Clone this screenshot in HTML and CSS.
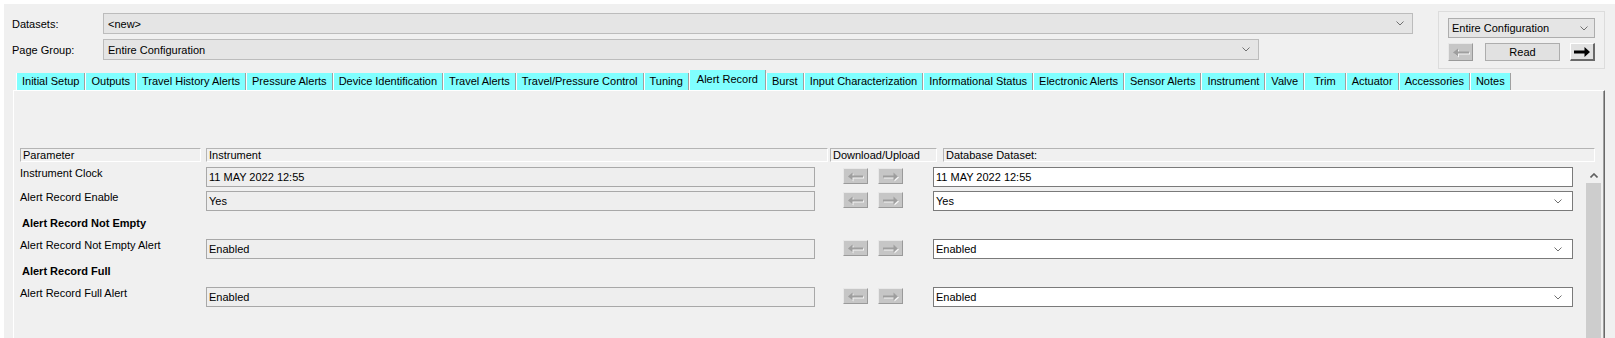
FILE: index.html
```html
<!DOCTYPE html>
<html lang="en">

<head>
  <meta charset="UTF-8">
  <title>Alert Record</title>
  <link rel="stylesheet" href="styles.css">
</head>

<body>
  <div class="window">
    <div class="top">
      <div class="selectors">
        <div class="sel-row">
          <label>Datasets:</label>
          <div class="combo combo-dataset"><span>&lt;new&gt;</span>
            <svg class="chev" width="8" height="5" viewBox="0 0 8 5"><path d="M0.5 0.5 L4 4 L7.5 0.5" /></svg>
          </div>
        </div>
        <div class="sel-row">
          <label>Page Group:</label>
          <div class="combo combo-page"><span>Entire Configuration</span>
            <svg class="chev" width="8" height="5" viewBox="0 0 8 5"><path d="M0.5 0.5 L4 4 L7.5 0.5" /></svg>
          </div>
        </div>
      </div>

      <div class="group">
        <div class="combo combo-small"><span>Entire Configuration</span>
          <svg class="chev" width="8" height="5" viewBox="0 0 8 5"><path d="M0.5 0.5 L4 4 L7.5 0.5" /></svg>
        </div>
        <div class="btn-row">
          <div class="arrow-btn disabled">
            <svg width="16" height="9" viewBox="0 0 16 9"><path d="M0 4.5 L5 0.5 V3.5 H16 V5.5 H5 V8.5 Z" /></svg>
          </div>
          <div class="read-btn">Read</div>
          <div class="arrow-btn active">
            <svg width="16" height="10" viewBox="0 0 16 10"><path d="M16 5 L10.5 0 V3.5 H0 V6.5 H10.5 V10 Z" /></svg>
          </div>
        </div>
      </div>
    </div>

    <div class="tabs">
      <div class="tab">Initial Setup</div>
      <div class="tab">Outputs</div>
      <div class="tab">Travel History Alerts</div>
      <div class="tab">Pressure Alerts</div>
      <div class="tab">Device Identification</div>
      <div class="tab">Travel Alerts</div>
      <div class="tab">Travel/Pressure Control</div>
      <div class="tab">Tuning</div>
      <div class="tab selected">Alert Record</div>
      <div class="tab">Burst</div>
      <div class="tab">Input Characterization</div>
      <div class="tab">Informational Status</div>
      <div class="tab">Electronic Alerts</div>
      <div class="tab">Sensor Alerts</div>
      <div class="tab">Instrument</div>
      <div class="tab">Valve</div>
      <div class="tab trim">Trim</div>
      <div class="tab">Actuator</div>
      <div class="tab">Accessories</div>
      <div class="tab">Notes</div>
    </div>

    <div class="panel">
      <div class="head">
        <div class="h-cell h-param">Parameter</div>
        <div class="h-cell h-inst">Instrument</div>
        <div class="h-cell h-dl">Download/Upload</div>
        <div class="h-cell h-db">Database Dataset:</div>
      </div>

      <div class="body">
        <div class="grid">
          <!-- Instrument Clock -->
          <div class="label">Instrument Clock</div>
          <div class="box inst">11 MAY 2022 12:55</div>
          <div class="arrows">
            <div class="arrow-btn disabled"><svg width="15" height="9" viewBox="0 0 15 9"><path d="M0 4.5 L4.5 0.5 V3.5 H15 V5.5 H4.5 V8.5 Z" /></svg></div>
            <div class="arrow-btn disabled"><svg width="15" height="9" viewBox="0 0 15 9"><path d="M15 4.5 L10.5 0.5 V3.5 H0 V5.5 H10.5 V8.5 Z" /></svg></div>
          </div>
          <div class="box db">11 MAY 2022 12:55</div>

          <!-- Alert Record Enable -->
          <div class="label">Alert Record Enable</div>
          <div class="box inst">Yes</div>
          <div class="arrows">
            <div class="arrow-btn disabled"><svg width="15" height="9" viewBox="0 0 15 9"><path d="M0 4.5 L4.5 0.5 V3.5 H15 V5.5 H4.5 V8.5 Z" /></svg></div>
            <div class="arrow-btn disabled"><svg width="15" height="9" viewBox="0 0 15 9"><path d="M15 4.5 L10.5 0.5 V3.5 H0 V5.5 H10.5 V8.5 Z" /></svg></div>
          </div>
          <div class="box db select"><span>Yes</span>
            <svg class="chev" width="8" height="5" viewBox="0 0 8 5"><path d="M0.5 0.5 L4 4 L7.5 0.5" /></svg>
          </div>

          <div class="section">Alert Record Not Empty</div>

          <div class="label">Alert Record Not Empty Alert</div>
          <div class="box inst">Enabled</div>
          <div class="arrows">
            <div class="arrow-btn disabled"><svg width="15" height="9" viewBox="0 0 15 9"><path d="M0 4.5 L4.5 0.5 V3.5 H15 V5.5 H4.5 V8.5 Z" /></svg></div>
            <div class="arrow-btn disabled"><svg width="15" height="9" viewBox="0 0 15 9"><path d="M15 4.5 L10.5 0.5 V3.5 H0 V5.5 H10.5 V8.5 Z" /></svg></div>
          </div>
          <div class="box db select"><span>Enabled</span>
            <svg class="chev" width="8" height="5" viewBox="0 0 8 5"><path d="M0.5 0.5 L4 4 L7.5 0.5" /></svg>
          </div>

          <div class="section">Alert Record Full</div>

          <div class="label">Alert Record Full Alert</div>
          <div class="box inst">Enabled</div>
          <div class="arrows">
            <div class="arrow-btn disabled"><svg width="15" height="9" viewBox="0 0 15 9"><path d="M0 4.5 L4.5 0.5 V3.5 H15 V5.5 H4.5 V8.5 Z" /></svg></div>
            <div class="arrow-btn disabled"><svg width="15" height="9" viewBox="0 0 15 9"><path d="M15 4.5 L10.5 0.5 V3.5 H0 V5.5 H10.5 V8.5 Z" /></svg></div>
          </div>
          <div class="box db select"><span>Enabled</span>
            <svg class="chev" width="8" height="5" viewBox="0 0 8 5"><path d="M0.5 0.5 L4 4 L7.5 0.5" /></svg>
          </div>
        </div>

        <div class="scrollbar">
          <div class="scroll-up">
            <svg width="8" height="5" viewBox="0 0 8 5"><path d="M0.5 4.5 L4 1 L7.5 4.5" /></svg>
          </div>
          <div class="thumb"></div>
        </div>
      </div>
    </div>
  </div>
</body>

</html>
```

FILE: styles.css
```css
/* Reset */
* {
  margin: 0;
  padding: 0;
  box-sizing: border-box;
}

body {
  font-family: "Liberation Sans", Arial, sans-serif;
  font-size: 11px;
  color: #000;
  background-color: #fff;
  height: 338px;
  overflow: hidden;
}

.window {
  margin: 4px 0 0 4px;
  height: 334px;
  background-color: #f0f0f0;
}

/* Top selectors */
.top {
  display: flex;
  height: 66px;
  padding: 7px 0 0 8px;
}

.selectors {
  display: flex;
  flex-direction: column;
  gap: 5px;
  margin-top: 2px;
}

.sel-row {
  display: flex;
  align-items: center;
  height: 21px;
}

.sel-row label {
  width: 91px;
}

.combo {
  display: flex;
  align-items: center;
  justify-content: space-between;
  height: 21px;
  padding: 0 8px 0 4px;
  border: 1px solid #bcbcbc;
  background-color: #e5e5e5;
}

.combo-dataset {
  width: 1310px;
}

.combo-page {
  width: 1156px;
}

.chev path {
  fill: none;
  stroke: #707070;
  stroke-width: 1;
}

.group {
  width: 167px;
  height: 58px;
  margin-left: 25px;
  padding: 6px 9px 0 9px;
  border: 1px solid #dcdcdc;
}

.combo-small {
  height: 20px;
  padding: 0 6px 0 3px;
  border-color: #adadad;
}

.btn-row {
  display: flex;
  align-items: center;
  margin-top: 5px;
  height: 18px;
}

.read-btn {
  width: 75px;
  height: 18px;
  margin: 0 10px 0 12px;
  line-height: 16px;
  text-align: center;
  background-color: #e1e1e1;
  border: 1px solid #adadad;
}

.arrow-btn {
  display: flex;
  align-items: center;
  justify-content: center;
  width: 25px;
  height: 16px;
  border-top: 1px solid #e8e8e8;
  border-left: 1px solid #e8e8e8;
  border-right: 1px solid #9a9a9a;
  border-bottom: 1px solid #9a9a9a;
}

.arrow-btn.disabled {
  background-color: #c6c6c6;
}

.arrow-btn.disabled path {
  fill: #9e9e9e;
}

.arrow-btn.disabled svg {
  filter: drop-shadow(1px 1px 0 #f4f4f4);
}

.btn-row .arrow-btn {
  height: 18px;
}

.arrow-btn.active {
  background-color: #e1e1e1;
  border-top-color: #fff;
  border-left-color: #fff;
  border-right: 2px solid #696969;
  border-bottom: 2px solid #696969;
}

.arrow-btn.active path {
  fill: #000;
}

/* Tabs */
.tabs {
  display: flex;
  align-items: flex-end;
  height: 20px;
  padding-left: 12px;
}

.tab {
  height: 17px;
  min-width: 36px;
  padding: 0 5px;
  line-height: 17px;
  text-align: center;
  white-space: nowrap;
  background-color: #80ffff;
  border-left: 1px solid #fff;
  border-right: 1px solid #a0a0a0;
}

.tab.selected {
  height: 20px;
  padding: 0 7px 2px 7px;
  line-height: 18px;
}

.tab.trim {
  padding: 0 9px;
}

/* Tab page */
.panel {
  width: 1592px;
  height: 248px;
  margin-left: 9px;
  padding: 57px 0 0 6px;
  border-left: 1px solid #fff;
  border-top: 1px solid #fff;
  border-right: 1px solid #696969;
  box-shadow: inset -1px 0 0 #a0a0a0;
}

.head {
  display: flex;
  height: 14px;
}

.h-cell {
  padding-left: 2px;
  line-height: 12px;
  white-space: nowrap;
  border-top: 1px solid #b4b4b4;
  border-left: 1px solid #b4b4b4;
  border-right: 1px solid #fff;
  border-bottom: 1px solid #fff;
}

.h-param {
  width: 181px;
  margin-right: 5px;
}

.h-inst {
  width: 622px;
  margin-right: 2px;
}

.h-dl {
  width: 107px;
  margin-right: 6px;
}

.h-db {
  width: 652px;
}

.body {
  display: flex;
  margin-top: 5px;
}

.grid {
  display: grid;
  grid-template-columns: 186px 609px 118px 640px;
  grid-auto-rows: 24px;
}

.label {
  line-height: 13px;
}

.section {
  grid-column: 1 / -1;
  padding: 2px 0 0 2px;
  font-weight: bold;
  line-height: 13px;
}

.box {
  display: flex;
  align-items: center;
  justify-content: space-between;
  height: 20px;
  padding: 0 10px 0 2px;
}

.box.inst {
  background-color: #eeeeee;
  border: 1px solid #a8a8a8;
}

.box.db {
  background-color: #fff;
  border: 1px solid #7a7a7a;
}

.arrows {
  display: flex;
  gap: 10px;
  padding: 1px 0 0 28px;
}

.scrollbar {
  display: flex;
  flex-direction: column;
  width: 15px;
  height: 171px;
  margin-left: 13px;
}

.scroll-up {
  display: flex;
  align-items: center;
  justify-content: center;
  height: 16px;
}

.scroll-up path {
  fill: none;
  stroke: #606060;
  stroke-width: 1.6;
}

.thumb {
  flex: 1;
  background-color: #cdcdcd;
}
```
